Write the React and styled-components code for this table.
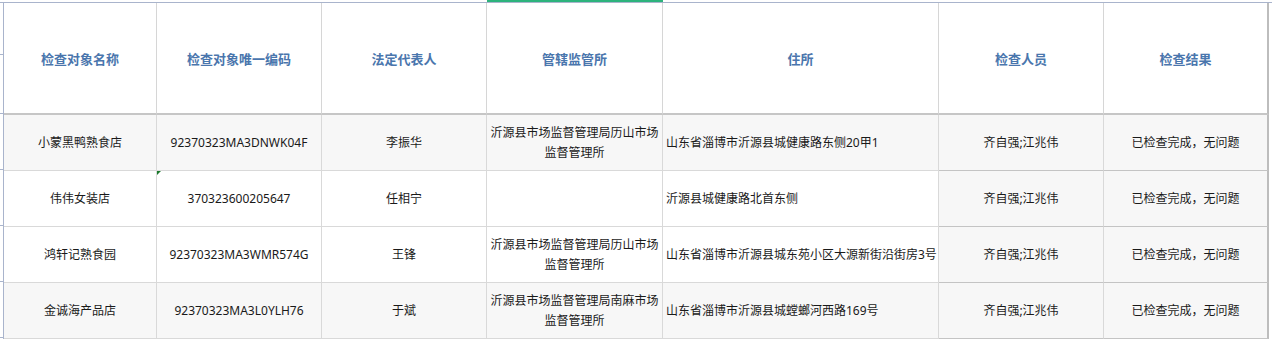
import React from 'react';
import styled, { createGlobalStyle, css } from 'styled-components';

const GlobalStyle = createGlobalStyle`
  html, body {
    margin: 0;
    padding: 0;
    background: #fff;
  }
  body {
    font-family: "Noto Sans", "Noto Sans CJK SC", sans-serif;
  }
`;

const Sheet = styled.div`
  display: flex;
  width: 1272px;
  margin-top: 2px;
  border-top: 1px solid #a9b4cc;
`;

const Gutter = styled.div`
  width: 3px;
  display: flex;
  flex-direction: column;
  border-right: 1px solid #a9b4cc;
`;

const GutterCell = styled.div`
  height: ${({ $h }) => $h}px;
  box-sizing: border-box;
  border-bottom: 1px solid #a9b4cc;
`;

const Grid = styled.div`
  display: grid;
  grid-template-columns: 153px 165px 165px 176px 276px 165px 165px;
  grid-template-rows: 112px repeat(4, 56px);
`;

const HeadCell = styled.div`
  position: relative;
  box-sizing: border-box;
  display: flex;
  align-items: center;
  justify-content: center;
  background: #fff;
  border-right: ${({ $last }) => ($last ? '2px solid #bdbdbd' : '1px solid #d6d6d6')};
  border-bottom: 2px solid #c6c6c6;
  color: #4a76ad;
  font-family: "Noto Sans CJK SC", sans-serif;
  font-size: 13px;
  font-weight: 700;
  ${({ $selected }) =>
    $selected &&
    css`
      &::before {
        content: '';
        position: absolute;
        left: 0;
        right: -1px;
        top: -3px;
        height: 2px;
        background: #2db37c;
      }
    `}
`;

const Cell = styled.div`
  position: relative;
  box-sizing: border-box;
  display: flex;
  align-items: center;
  justify-content: ${({ $left }) => ($left ? 'flex-start' : 'center')};
  text-align: ${({ $left }) => ($left ? 'left' : 'center')};
  white-space: ${({ $left }) => ($left ? 'nowrap' : 'normal')};
  padding: ${({ $left }) => ($left ? '0 0 0 3px' : '0 2px')};
  background: ${({ $shade }) => ($shade ? '#f7f7f7' : '#fff')};
  border-right: ${({ $last }) => ($last ? '2px solid #bdbdbd' : '1px solid #d9d9d9')};
  border-bottom: 1px solid ${({ $strong }) => ($strong ? '#c4c4c4' : '#d9d9d9')};
  color: #1a1a1a;
  font-size: 12px;
  line-height: 20px;
  ${({ $flag }) =>
    $flag &&
    css`
      &::before {
        content: '';
        position: absolute;
        left: 0;
        top: 0;
        border-top: 4px solid #1b7a2c;
        border-right: 4px solid transparent;
      }
    `}
`;

const headers = ['检查对象名称', '检查对象唯一编码', '法定代表人', '管辖监管所', '住所', '检查人员', '检查结果'];

const rows = [
  {
    name: '小蒙黑鸭熟食店',
    code: '92370323MA3DNWK04F',
    rep: '李振华',
    office: '沂源县市场监督管理局历山市场监督管理所',
    addr: '山东省淄博市沂源县城健康路东侧20甲1',
    shade: true,
  },
  {
    name: '伟伟女装店',
    code: '370323600205647',
    rep: '任相宁',
    office: '',
    addr: '沂源县城健康路北首东侧',
    flag: true,
  },
  {
    name: '鸿轩记熟食园',
    code: '92370323MA3WMR574G',
    rep: '王锋',
    office: '沂源县市场监督管理局历山市场监督管理所',
    addr: '山东省淄博市沂源县城东苑小区大源新街沿街房3号',
  },
  {
    name: '金诚海产品店',
    code: '92370323MA3L0YLH76',
    rep: '于斌',
    office: '沂源县市场监督管理局南麻市场监督管理所',
    addr: '山东省淄博市沂源县城螳螂河西路169号',
    shade: true,
  },
];

const App = () => (
  <>
    <GlobalStyle />
    <Sheet>
      <Gutter>
        {[52, 59, 56, 56, 56, 56].map((h, i) => (
          <GutterCell key={i} $h={h} />
        ))}
      </Gutter>
      <Grid>
        {headers.map((h, i) => (
          <HeadCell key={h} $selected={i === 3} $last={i === headers.length - 1}>
            {h}
          </HeadCell>
        ))}
        {rows.map((r) => (
          <React.Fragment key={r.name}>
            <Cell $shade={r.shade}>{r.name}</Cell>
            <Cell $shade={r.shade} $flag={r.flag}>{r.code}</Cell>
            <Cell $shade={r.shade}>{r.rep}</Cell>
            <Cell $shade={r.shade}>{r.office}</Cell>
            <Cell $shade={r.shade} $left>{r.addr}</Cell>
            <Cell $shade $strong>齐自强;江兆伟</Cell>
            <Cell $shade $strong $last>已检查完成，无问题</Cell>
          </React.Fragment>
        ))}
      </Grid>
    </Sheet>
  </>
);

export default App;
